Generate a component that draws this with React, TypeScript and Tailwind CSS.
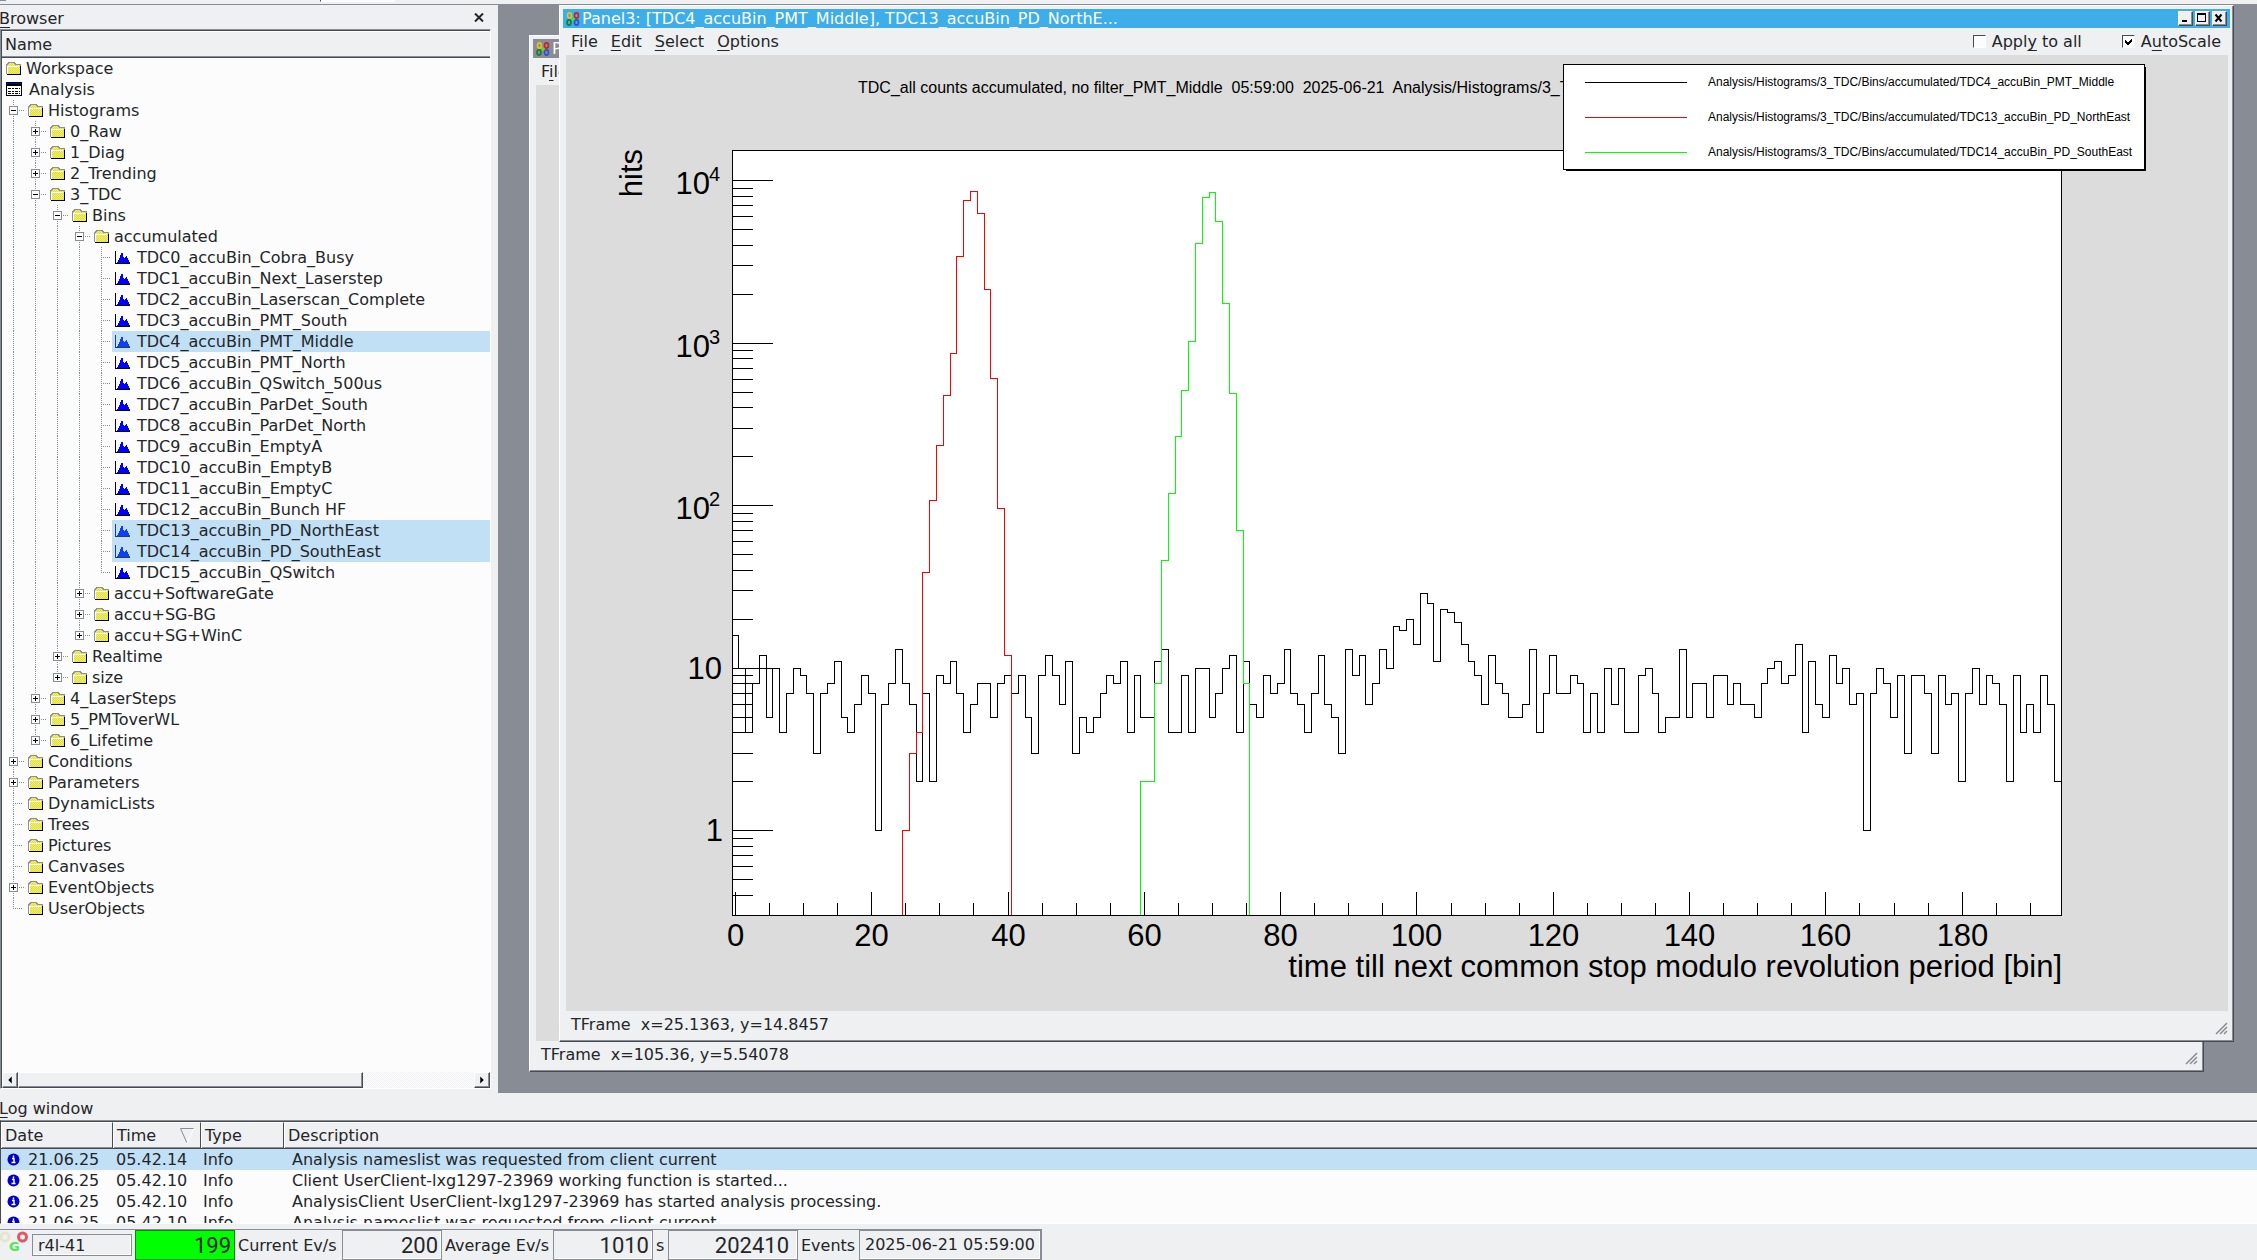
import type { ReactNode } from "react";

type TreeNode = {
  name: string;
  kind?: "folder" | "analysis" | "hist";
  closed?: boolean;
  selected?: boolean;
  children?: TreeNode[];
};

const hist = (name: string, selected = false): TreeNode => ({ name, kind: "hist", selected });

const tree: TreeNode[] = [
  { name: "Workspace" },
  {
    name: "Analysis",
    kind: "analysis",
    children: [
      {
        name: "Histograms",
        children: [
          { name: "0_Raw", closed: true },
          { name: "1_Diag", closed: true },
          { name: "2_Trending", closed: true },
          {
            name: "3_TDC",
            children: [
              {
                name: "Bins",
                children: [
                  {
                    name: "accumulated",
                    children: [
                      hist("TDC0_accuBin_Cobra_Busy"),
                      hist("TDC1_accuBin_Next_Laserstep"),
                      hist("TDC2_accuBin_Laserscan_Complete"),
                      hist("TDC3_accuBin_PMT_South"),
                      hist("TDC4_accuBin_PMT_Middle", true),
                      hist("TDC5_accuBin_PMT_North"),
                      hist("TDC6_accuBin_QSwitch_500us"),
                      hist("TDC7_accuBin_ParDet_South"),
                      hist("TDC8_accuBin_ParDet_North"),
                      hist("TDC9_accuBin_EmptyA"),
                      hist("TDC10_accuBin_EmptyB"),
                      hist("TDC11_accuBin_EmptyC"),
                      hist("TDC12_accuBin_Bunch HF"),
                      hist("TDC13_accuBin_PD_NorthEast", true),
                      hist("TDC14_accuBin_PD_SouthEast", true),
                      hist("TDC15_accuBin_QSwitch"),
                    ],
                  },
                  { name: "accu+SoftwareGate", closed: true },
                  { name: "accu+SG-BG", closed: true },
                  { name: "accu+SG+WinC", closed: true },
                ],
              },
              { name: "Realtime", closed: true },
              { name: "size", closed: true },
            ],
          },
          { name: "4_LaserSteps", closed: true },
          { name: "5_PMToverWL", closed: true },
          { name: "6_Lifetime", closed: true },
        ],
      },
      { name: "Conditions", closed: true },
      { name: "Parameters", closed: true },
      { name: "DynamicLists" },
      { name: "Trees" },
      { name: "Pictures" },
      { name: "Canvases" },
      { name: "EventObjects", closed: true },
      { name: "UserObjects" },
    ],
  },
];

const logRows = [
  ["21.06.25", "05.42.14", "Info", "Analysis nameslist was requested from client current"],
  ["21.06.25", "05.42.10", "Info", "Client UserClient-lxg1297-23969 working function is started..."],
  ["21.06.25", "05.42.10", "Info", "AnalysisClient UserClient-lxg1297-23969 has started analysis processing."],
  ["21.06.25", "05.42.10", "Info", "Analysis nameslist was requested from client current"],
];

// One entry per bin, starting at bin 0
const pmtMiddle = [
  16, 10, 4, 8, 12, 5, 10, 4, 7, 10, 9, 7, 3, 7, 8, 11, 5, 4, 6, 9,
  7, 1, 6, 8, 13, 8, 6, 2, 7, 2, 9, 8, 11, 7, 4, 6, 8, 8, 5, 8,
  9, 7, 9, 5, 3, 9, 12, 9, 6, 11, 3, 5, 4, 5, 7, 9, 8, 11, 4, 9,
  5, 5, 11, 13, 4, 4, 9, 4, 10, 10, 5, 7, 10, 12, 4, 11, 6, 5, 9, 7,
  8, 13, 7, 6, 4, 7, 12, 6, 5, 3, 13, 9, 12, 6, 8, 13, 10, 18, 17, 20,
  14, 29, 25, 11, 23, 22, 19, 14, 11, 9, 6, 12, 8, 7, 5, 5, 6, 13, 4, 7,
  12, 7, 7, 9, 8, 4, 7, 4, 10, 6, 10, 4, 4, 9, 10, 7, 4, 5, 5, 13,
  5, 8, 8, 5, 9, 9, 6, 8, 6, 6, 5, 8, 10, 11, 8, 9, 14, 4, 11, 6,
  5, 12, 8, 10, 6, 7, 1, 7, 10, 8, 5, 9, 3, 9, 9, 7, 3, 9, 6, 7,
  2, 7, 10, 6, 9, 8, 6, 2, 9, 4, 6, 4, 9, 6, 2,
];
const pdNorthEast = [1, 3, 4, 39, 108, 235, 476, 864, 3415, 7550, 8580, 6281, 2140, 606, 96, 12];
const pdSouthEast = [2, 2, 8, 46, 119, 267, 512, 1024, 4106, 7880, 8459, 5608, 1755, 490, 70, 8];

// Plot frame inside the canvas
const LEFT = 166;
const RIGHT = 1495;
const TOP = 95;
const BOTTOM = 860;
const binX = (bin: number) => Math.floor(LEFT + (bin * (RIGHT - LEFT)) / 195) + 0.5;
const logY = (v: number) => Math.floor(775.7 - 162.5 * Math.log10(v)) + 0.5;

function stepPath(values: number[], start: number, closed: boolean) {
  let d = closed ? `M${binX(start)} ${BOTTOM}` : `M${binX(start)} ${logY(values[0])}`;
  values.forEach((v, i) => {
    d += `V${logY(v)}H${binX(start + i + 1)}`;
  });
  return closed ? d + `V${BOTTOM}` : d;
}

const minorY = [-1, 0, 1, 2, 3].flatMap((e) =>
  [2, 3, 4, 5, 6, 7, 8, 9].map((m) => m * 10 ** e).filter((v) => v > 0.35),
);
const ticksX = Array.from({ length: 39 }, (_, i) => i * 5);

const legend = [
  { color: "#000000", y: 18, text: "Analysis/Histograms/3_TDC/Bins/accumulated/TDC4_accuBin_PMT_Middle" },
  { color: "#ff0000", y: 53, text: "Analysis/Histograms/3_TDC/Bins/accumulated/TDC13_accuBin_PD_NorthEast" },
  { color: "#00ff00", y: 88, text: "Analysis/Histograms/3_TDC/Bins/accumulated/TDC14_accuBin_PD_SouthEast" },
];

function Chart() {
  return (
    <svg
      viewBox="0 0 1662 956"
      className="block h-full w-full font-['Liberation_Sans',Arial,sans-serif]"
      role="img"
      aria-label="TDC histogram"
    >
      <text x="292" y="38" fontSize="16" className="whitespace-pre">
        {"TDC_all counts accumulated, no filter_PMT_Middle  05:59:00  2025-06-21  Analysis/Histograms/3_TDC"}
      </text>
      <g fill="none" stroke="black" shapeRendering="crispEdges">
        <rect x={LEFT + 0.5} y={TOP + 0.5} width={RIGHT - LEFT} height={BOTTOM - TOP} fill="white" />
        <path d={stepPath(pmtMiddle, 0, false)} />
        <path d={stepPath(pdNorthEast, 25, true)} stroke="#ff0000" />
        <path d={stepPath(pdSouthEast, 60, true)} stroke="#00ff00" />
        {minorY.map((v) => (
          <path key={v} d={`M${LEFT} ${logY(v)}h21`} />
        ))}
        {[1, 10, 100, 1000, 10000].map((v) => (
          <path key={v} d={`M${LEFT} ${logY(v)}h41`} />
        ))}
        {ticksX.map((v) => (
          <path key={v} d={`M${binX(v + 0.5)} ${BOTTOM}v${v % 20 === 0 ? -23 : -12}`} />
        ))}
      </g>
      <g fontSize="31">
        {[0, 20, 40, 60, 80, 100, 120, 140, 160, 180].map((v) => (
          <text key={v} x={binX(v + 0.5)} y="891" textAnchor="middle">
            {v}
          </text>
        ))}
        <text x="1496" y="922" textAnchor="end">
          time till next common stop modulo revolution period [bin]
        </text>
        <text transform="translate(76 94) rotate(-90)" textAnchor="end">
          hits
        </text>
        <text x="157" y="786" textAnchor="end">1</text>
        <text x="156" y="624" textAnchor="end">10</text>
        {[2, 3, 4].map((e) => (
          <g key={e}>
            <text x="144" y={logY(10 ** e) + 13} textAnchor="end">10</text>
            <text x="143" y={logY(10 ** e)} fontSize="20">{e}</text>
          </g>
        ))}
      </g>
      <g transform="translate(997 9)">
        <rect x="3" y="3" width="580" height="104" />
        <rect x="0.5" y="0.5" width="581" height="105" fill="white" stroke="black" />
        {legend.map((item) => (
          <g key={item.y}>
            <path d={`M22 ${item.y + 0.5}h102`} stroke={item.color} shapeRendering="crispEdges" />
            <text x="145" y={item.y + 4} fontSize="12">{item.text}</text>
          </g>
        ))}
      </g>
    </svg>
  );
}

function FolderIcon() {
  return (
    <svg width="16" height="14" viewBox="0 0 16 14" shapeRendering="crispEdges" className="shrink-0">
      <path d="M1 13V3h1V2h1V1h5v1h1v1h5v10z" fill="url(#folder-dots)" />
      <path d="M0 12V3h1V2h1V1h6v1h1v1h5v9" fill="none" stroke="#909090" transform="translate(.5 -.5)" />
      <path d="M2 12V5H13" fill="none" stroke="#ffffff" transform="translate(-.5 -.5)" />
      <path d="M1 12.5h14M14.5 4v9" stroke="#000000" fill="none" />
    </svg>
  );
}

function AnalysisIcon() {
  return (
    <svg width="16" height="15" viewBox="0 0 16 15" shapeRendering="crispEdges" className="mr-[3px] ml-px shrink-0">
      <path d="M.5.5h15v13H.5z" fill="#ffffff" stroke="#000000" />
      <path d="M1 1.5h14" stroke="#0000c0" />
      <path d="M1 3h14" stroke="#000000" strokeWidth="2" />
      <path d="M2 6.5h12M2 9.5h12M2 11.5h12" stroke="#000000" strokeDasharray="3 1 2 1" />
    </svg>
  );
}

function HistIcon({ selected }: { selected?: boolean }) {
  return (
    <svg width="16" height="14" viewBox="0 0 16 14" shapeRendering="crispEdges" className="shrink-0">
      <path d="M.5 0v12.5H15" fill="none" stroke={selected ? "#204060" : "#000000"} />
      <path
        d="M2 12v-1h1v-2h1V7h1V4h1V2h2v4h1v1h1V6h1V5h1v2h1v2h1v2h1v1z"
        fill={selected ? "#1040f0" : "#0000ff"}
      />
    </svg>
  );
}

// Dotted connector drawn in front of a tree item
function Guide({ above, below, box, leaf }: { above: boolean; below: boolean; box?: "+" | "-"; leaf?: boolean }) {
  return (
    <svg width="22" height="21" viewBox="0 0 22 21" shapeRendering="crispEdges" className="shrink-0">
      <g stroke="#888c94" fill="none">
        {above && <path d="M11.5 0V11" strokeDasharray="1 1" />}
        {below && <path d="M11.5 10V21" strokeDasharray="1 1" />}
        {leaf && <path d="M11 10.5H21" strokeDasharray="1 1" />}
        {box && (
          <>
            <path d="M17 10.5h5" strokeDasharray="1 1" />
            <path d="M7.5 6.5h8v8h-8z" fill="#fcfcfc" />
            <path d="M9 10.5h5" stroke="#000000" />
            {box === "+" && <path d="M11.5 8v5" stroke="#000000" />}
          </>
        )}
      </g>
    </svg>
  );
}

function TreeItem({ node, trail, last }: { node: TreeNode; trail: boolean[] | null; last: boolean }) {
  const box = node.closed ? "+" : node.children ? "-" : undefined;
  return (
    <li>
      <div className="flex h-[21px]">
        {trail?.map((more, i) => (
          <Guide key={i} above={more} below={more} />
        ))}
        {trail && <Guide above below={!last} box={box} leaf={!box} />}
        <div className={`flex flex-1 items-center pl-[3px] ${node.selected ? "bg-[#c1dff5]" : ""}`}>
          {node.kind === "hist" ? (
            <HistIcon selected={node.selected} />
          ) : node.kind === "analysis" ? (
            <AnalysisIcon />
          ) : (
            <span className="pl-px">
              <FolderIcon />
            </span>
          )}
          <span className={node.kind === "hist" ? "pl-[6px]" : "pl-[4px]"}>{node.name}</span>
        </div>
      </div>
      {node.children && (
        <ul>
          {node.children.map((child, i) => (
            <TreeItem
              key={child.name}
              node={child}
              trail={trail ? [...trail, !last] : []}
              last={i === node.children!.length - 1}
            />
          ))}
        </ul>
      )}
    </li>
  );
}

function Key({ children }: { children: ReactNode }) {
  return <span className="underline decoration-1 underline-offset-[3px]">{children}</span>;
}

function ScrollButton({ label, d }: { label: string; d: string }) {
  return (
    <button
      aria-label={label}
      className="w-[16px] border border-white border-r-[#474a4f] border-b-[#474a4f] bg-[#eff0f1] shadow-[inset_-1px_-1px_0_#888c94]"
    >
      <svg width="14" height="14" viewBox="0 0 16 16">
        <path d={d} fill="#000000" />
      </svg>
    </button>
  );
}

function Browser() {
  return (
    <aside className="flex w-[499px] shrink-0 flex-col border-t border-r border-[#888c94] pb-[4px]">
      <div className="flex h-[24px] items-end justify-between pr-[14px]">
        <h2 className="-ml-px">
          <Key>B</Key>rowser
        </h2>
        <button aria-label="Close browser" className="pb-[7px]">
          <svg width="10" height="9" viewBox="0 0 10 9">
            <path d="M1 .5l8 8M9 .5l-8 8" stroke="#232629" strokeWidth="2" />
          </svg>
        </button>
      </div>
      <div className="mr-[7px] flex min-h-0 flex-1 flex-col border-t border-r border-b border-l border-t-[#888c94] border-r-white border-b-white border-l-[#888c94]">
        <div className="flex min-h-0 flex-1 flex-col border-t border-l border-[#474a4f]">
          <div className="h-[27px] border-t border-b border-t-white border-b-[#474a4f] pl-[3px] leading-[25px] shadow-[inset_0_-1px_0_#888c94]">
            Name
          </div>
          <ul className="min-h-0 flex-1 overflow-hidden bg-[#fcfcfc]">
            {tree.map((node) => (
              <TreeItem key={node.name} node={node} trail={null} last={false} />
            ))}
          </ul>
          <div className="flex h-[16px] bg-[repeating-conic-gradient(#ffffff_0_25%,#eff0f1_0_50%)] bg-[length:2px_2px]">
            <ScrollButton label="Scroll left" d="M10 4v8L6 8z" />
            <div className="w-[345px] border border-white border-r-[#474a4f] border-b-[#474a4f] bg-[#eff0f1] shadow-[inset_-1px_-1px_0_#888c94]" />
            <div className="flex-1" />
            <ScrollButton label="Scroll right" d="M6 4v8l4-4z" />
          </div>
        </div>
      </div>
    </aside>
  );
}

function PanelIcon() {
  return (
    <svg width="14" height="14" viewBox="0 0 14 14" fill="none" strokeWidth="1.6" className="shrink-0">
      <ellipse cx="3.5" cy="3.5" rx="2" ry="2.6" stroke="#e8c020" />
      <ellipse cx="10.5" cy="3.5" rx="2" ry="2.6" stroke="#d02020" />
      <ellipse cx="3" cy="10.5" rx="2" ry="2.6" stroke="#108030" />
      <ellipse cx="10.5" cy="10.5" rx="2" ry="2.6" stroke="#3050d0" />
      <circle cx="7" cy="7" r="1.8" fill="#50e020" />
    </svg>
  );
}

function TitleButton({ label, children }: { label: string; children: ReactNode }) {
  return (
    <button
      aria-label={label}
      className="h-[15px] w-[15px] border border-white border-r-[#474a4f] border-b-[#474a4f] bg-[#eff0f1] shadow-[inset_-1px_-1px_0_#888c94]"
    >
      <svg width="13" height="13" viewBox="0 0 13 13" fill="none" stroke="#000000" shapeRendering="crispEdges">
        {children}
      </svg>
    </button>
  );
}

function CheckBox({ label, checked }: { label: ReactNode; checked?: boolean }) {
  return (
    <label className="flex items-center gap-[6px]">
      <span className="relative block h-[13px] w-[13px]">
        <input
          type="checkbox"
          defaultChecked={checked}
          className="peer block h-[13px] w-[13px] appearance-none border border-t-[#474a4f] border-r-white border-b-white border-l-[#474a4f] bg-[#fcfcfc]"
        />
        <svg
          viewBox="0 0 13 13"
          className="pointer-events-none absolute inset-0 hidden peer-checked:block"
          shapeRendering="crispEdges"
        >
          <path d="M3 5v3l2 2h1l4-4V3L5.5 7.5z" fill="#000000" />
        </svg>
      </span>
      <span>{label}</span>
    </label>
  );
}

type PanelProps = { title: string; status: string; active?: boolean; place: string; children?: ReactNode };

function Panel({ title, status, active, place, children }: PanelProps) {
  return (
    <section
      className={`absolute flex flex-col border border-white border-r-[#474a4f] border-b-[#474a4f] bg-[#eff0f1] px-[3px] pt-[3px] shadow-[inset_-1px_-1px_0_#888c94] ${place}`}
    >
      <header
        className={`flex h-[19px] items-center gap-[2px] overflow-hidden pr-[3px] pl-[3px] text-[#fcfcfc] ${
          active ? "bg-[#3daee9]" : "bg-[#888c94]"
        }`}
      >
        <PanelIcon />
        <h3 className="flex-1 leading-[19px]">{title}</h3>
        <div className="flex gap-[2px]">
          <TitleButton label="Minimize">
            <path d="M3 9h5" strokeWidth="2" />
          </TitleButton>
          <TitleButton label="Maximize">
            <path d="M1.5 1.5h8v8h-8z" />
            <path d="M1 2h9" strokeWidth="2" />
          </TitleButton>
          <TitleButton label="Close">
            <path d="M2.5 2.5l6 7M8.5 2.5l-6 7" strokeWidth="2" shapeRendering="auto" />
          </TitleButton>
        </div>
      </header>
      <div className="flex h-[27px] items-center justify-between pr-[9px] pl-[2px]">
        <nav className="flex gap-px">
          <button className="px-[6px]">F<Key>i</Key>le</button>
          <button className="px-[6px]"><Key>E</Key>dit</button>
          <button className="px-[6px]"><Key>S</Key>elect</button>
          <button className="px-[6px]"><Key>O</Key>ptions</button>
        </nav>
        <div className="flex gap-[40px]">
          <CheckBox label={<>Appl<Key>y</Key> to all</>} />
          <CheckBox label={<>A<Key>u</Key>toScale</>} checked />
        </div>
      </div>
      <div className="mr-[2px] ml-[3px] min-h-0 flex-1 bg-[#dcdcdc]">{children}</div>
      <footer className="flex h-[30px] items-end justify-between pr-[2px] pb-[6px] pl-[8px] leading-[21px]">
        <span className="whitespace-pre">{status}</span>
        <svg width="13" height="13" viewBox="0 0 13 13" stroke="#888c94">
          <path d="M1 12L12 1M5 12l7-7M9 12l3-3" strokeWidth="1.5" />
        </svg>
      </footer>
    </section>
  );
}

function InfoIcon() {
  return (
    <svg width="13" height="13" viewBox="0 0 13 13" className="inline-block align-[-1px]">
      <circle cx="6.5" cy="6.5" r="6" fill="#0000c8" />
      <path d="M6.5 2.5v2M5 5.5h2v4M4.5 9.5h4" stroke="#ffffff" strokeWidth="1.4" fill="none" />
    </svg>
  );
}

function LogWindow() {
  const th =
    "h-[27px] border-t border-b border-t-white border-b-[#474a4f] p-0 pl-[4px] text-left font-normal shadow-[inset_1px_0_0_#ffffff,inset_0_-1px_0_#888c94]";
  return (
    <section className="flex h-[136px] shrink-0 flex-col pb-[5px]">
      <h2 className="-ml-px h-[27px] pt-[5px]">
        <Key>L</Key>og window
      </h2>
      <div className="min-h-0 flex-1 overflow-hidden border-t border-b border-l border-t-[#888c94] border-b-white border-l-[#474a4f] bg-[#fcfcfc]">
        <table className="w-full table-fixed border-separate border-spacing-0 border-t border-[#474a4f]">
          <thead className="bg-[#eff0f1]">
            <tr>
              <th className={`${th} w-[112px] border-r border-r-[#474a4f]`}>Date</th>
              <th className={`${th} w-[88px] border-r border-r-[#474a4f]`}>
                <span className="flex items-center justify-between pr-[6px]">
                  Time
                  <svg width="14" height="16" viewBox="0 0 14 16" fill="none">
                    <path d="M13.5.5H.5L7 15" stroke="#888c94" />
                    <path d="M13.5 1L7 15" stroke="#ffffff" />
                  </svg>
                </span>
              </th>
              <th className={`${th} w-[83px] border-r border-r-[#474a4f]`}>Type</th>
              <th className={th}>Description</th>
            </tr>
          </thead>
          <tbody>
            {logRows.map(([date, time, type, text], i) => (
              <tr key={i} className={i === 0 ? "bg-[#c1dff5]" : ""}>
                <td className="h-[21px] p-0 pl-[6px] whitespace-nowrap">
                  <InfoIcon />
                  <span className="pl-[8px]">{date}</span>
                </td>
                <td className="p-0 pl-[3px]">{time}</td>
                <td className="p-0 pl-[2px]">{type}</td>
                <td className="p-0 pl-[8px]">{text}</td>
              </tr>
            ))}
          </tbody>
        </table>
      </div>
    </section>
  );
}

function Lcd({ value, box }: { value: string; box: string }) {
  return (
    <output
      className={`flex h-[30px] items-center justify-end border font-['Roboto',sans-serif] text-[22px] ${box}`}
    >
      {value}
    </output>
  );
}

function StatusBar() {
  const sunken = "border-[#888c94] shadow-[inset_-1px_-1px_0_#ffffff]";
  return (
    <footer className="flex h-[31px] shrink-0">
      <div className="flex items-center border-t border-r border-[#888c94]">
        <svg width="28" height="28" viewBox="0 0 28 28" fill="none" className="mr-[4px]">
          <circle cx="5" cy="6" r="4" stroke="#e6e6d0" strokeWidth="3" />
          <circle cx="22.5" cy="6" r="4" stroke="#e05868" strokeWidth="3" />
          <text x="9" y="20" fontSize="13" fontWeight="bold" fill="#50e850">G</text>
        </svg>
        <input
          aria-label="Host"
          defaultValue="r4l-41"
          className="mr-[3px] h-[22px] w-[100px] border border-[#888c94] pl-[5px] shadow-[inset_-1px_-1px_0_#ffffff]"
        />
        <Lcd value="199" box="w-[100px] border-[#008c00] bg-[#00ff00] pr-[3px]" />
        <span className="w-[107px] pl-[3px]">Current Ev/s</span>
        <Lcd value="200" box={`w-[100px] pr-[3px] ${sunken}`} />
        <span className="w-[111px] pl-[3px]">Average Ev/s</span>
        <Lcd value="1010" box={`w-[100px] pr-[3px] ${sunken}`} />
        <span className="w-[15px] pl-[3px]">s</span>
        <Lcd value="202410" box={`w-[130px] pr-[8px] ${sunken}`} />
        <span className="w-[61px] pl-[3px]">Events</span>
        <span className={`h-[30px] border px-[5px] leading-[28px] ${sunken}`}>2025-06-21 05:59:00</span>
      </div>
    </footer>
  );
}

export default function App() {
  return (
    <div className="flex h-screen flex-col overflow-hidden bg-[#eff0f1] font-['DejaVu_Sans',Verdana,sans-serif] text-[16px] leading-[21px] text-[#232629]">
      <svg width="0" height="0" className="absolute">
        <defs>
          <pattern id="folder-dots" width="2" height="2" patternUnits="userSpaceOnUse">
            <rect width="2" height="2" fill="#ffff00" />
            <rect width="1" height="1" fill="#d0d0b0" />
            <rect x="1" y="1" width="1" height="1" fill="#d0d0b0" />
          </pattern>
        </defs>
      </svg>
      {/* Lower edge of the toolbar */}
      <div className="flex h-[4px] shrink-0 items-start">
        <div className="h-px w-[6px] bg-[#888c94]" />
        <div className="ml-[314px] h-[2px] w-[75px] border-b border-l border-b-white border-l-[#474a4f] bg-[#fcfcfc]" />
      </div>
      <main className="flex min-h-0 flex-1">
        <Browser />
        <div className="relative min-w-0 flex-1 overflow-hidden border-t border-[#888c94] bg-[#888c94]">
          <Panel
            title="Panel1"
            status="TFrame  x=105.36, y=5.54078"
            place="top-[30px] right-[53px] bottom-[21px] left-[30px]"
          />
          <Panel
            active
            title="Panel3: [TDC4_accuBin_PMT_Middle], TDC13_accuBin_PD_NorthE..."
            status="TFrame  x=25.1363, y=14.8457"
            place="top-0 right-[23px] bottom-[51px] left-[60px]"
          >
            <Chart />
          </Panel>
        </div>
      </main>
      <LogWindow />
      <StatusBar />
    </div>
  );
}
